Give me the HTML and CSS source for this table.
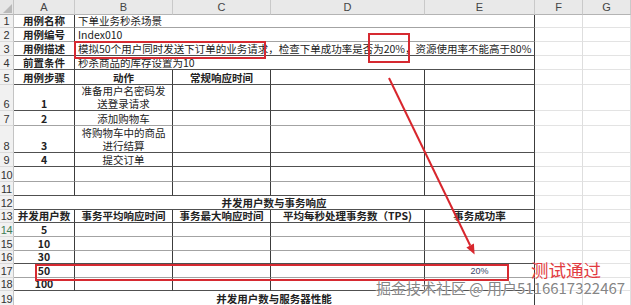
FILE: index.html
```html
<!DOCTYPE html>
<html lang="zh-CN">
<head>
<meta charset="utf-8">
<title>用例</title>
<link rel="stylesheet" href="styles.css">
</head>
<body>
<div class="sheet">
  <div class="row">
    <div class="corner"><svg class="tri" width="14" height="15" viewBox="0 0 14 15"><polygon points="12,4 12,13 3,13" fill="#b9b9b9"/></svg></div>
    <div class="ch">A</div><div class="ch">B</div><div class="ch">C</div><div class="ch">D</div><div class="ch">E</div><div class="ch">F</div><div class="ch">G</div>
  </div>
  <div class="row lt">
    <div class="rh">1</div>
    <div class="c b ctr">用例名称</div>
    <div class="c s4">下单业务秒杀场景</div>
    <div class="x"></div><div class="x"></div>
  </div>
  <div class="row lt">
    <div class="rh">2</div>
    <div class="c b ctr">用例编号</div>
    <div class="c s4">Index010</div>
    <div class="x"></div><div class="x"></div>
  </div>
  <div class="row">
    <div class="rh">3</div>
    <div class="c b ctr">用例描述</div>
    <div class="c s4">模拟50个用户同时发送下订单的业务请求，检查下单成功率是否为20%，资源使用率不能高于80%</div>
    <div class="x"></div><div class="x"></div>
  </div>
  <div class="row">
    <div class="rh">4</div>
    <div class="c b ctr">前置条件</div>
    <div class="c s4">秒杀商品的库存设置为10</div>
    <div class="x"></div><div class="x"></div>
  </div>
  <div class="row">
    <div class="rh">5</div>
    <div class="c b ctr">用例步骤</div>
    <div class="c b ctr">动作</div>
    <div class="c b ctr">常规响应时间</div>
    <div class="c"></div><div class="c"></div>
    <div class="x"></div><div class="x"></div>
  </div>
  <div class="row">
    <div class="rh">6</div>
    <div class="c b ctr">1</div>
    <div class="c ctr wrap">准备用户名密码发<br>送登录请求</div>
    <div class="c"></div><div class="c"></div><div class="c"></div>
    <div class="x"></div><div class="x"></div>
  </div>
  <div class="row lt">
    <div class="rh">7</div>
    <div class="c b ctr">2</div>
    <div class="c ctr">添加购物车</div>
    <div class="c"></div><div class="c"></div><div class="c"></div>
    <div class="x"></div><div class="x"></div>
  </div>
  <div class="row">
    <div class="rh">8</div>
    <div class="c b ctr">3</div>
    <div class="c ctr wrap">将购物车中的商品<br>进行结算</div>
    <div class="c"></div><div class="c"></div><div class="c"></div>
    <div class="x"></div><div class="x"></div>
  </div>
  <div class="row">
    <div class="rh">9</div>
    <div class="c b ctr">4</div>
    <div class="c ctr">提交订单</div>
    <div class="c"></div><div class="c"></div><div class="c"></div>
    <div class="x"></div><div class="x"></div>
  </div>
  <div class="row lt">
    <div class="rh">10</div>
    <div class="c"></div><div class="c"></div><div class="c"></div><div class="c"></div><div class="c"></div>
    <div class="x"></div><div class="x"></div>
  </div>
  <div class="row">
    <div class="rh">11</div>
    <div class="c"></div><div class="c"></div><div class="c"></div><div class="c"></div><div class="c"></div>
    <div class="x"></div><div class="x"></div>
  </div>
  <div class="row">
    <div class="rh">12</div>
    <div class="c s5 b ctr">并发用户数与事务响应</div>
    <div class="x"></div><div class="x"></div>
  </div>
  <div class="row">
    <div class="rh">13</div>
    <div class="c b ctr">并发用户数</div>
    <div class="c b ctr">事务平均响应时间</div>
    <div class="c b ctr">事务最大响应时间</div>
    <div class="c b ctr">平均每秒处理事务数（TPS)</div>
    <div class="c b ctr">事务成功率</div>
    <div class="x"></div><div class="x"></div>
  </div>
  <div class="row lt">
    <div class="rh sel">14</div>
    <div class="c b ctr">5</div>
    <div class="c"></div><div class="c"></div><div class="c"></div><div class="c"></div>
    <div class="x"></div><div class="x"></div>
  </div>
  <div class="row lt">
    <div class="rh">15</div>
    <div class="c b ctr">10</div>
    <div class="c"></div><div class="c"></div><div class="c"></div><div class="c"></div>
    <div class="x"></div><div class="x"></div>
  </div>
  <div class="row">
    <div class="rh">16</div>
    <div class="c b ctr">30</div>
    <div class="c"></div><div class="c"></div><div class="c"></div><div class="c"></div>
    <div class="x"></div><div class="x"></div>
  </div>
  <div class="row lt">
    <div class="rh">17</div>
    <div class="c b ctr">50</div>
    <div class="c"></div><div class="c"></div><div class="c"></div>
    <div class="c ctr pct">20%</div>
    <div class="x"></div><div class="x"></div>
  </div>
  <div class="row">
    <div class="rh">18</div>
    <div class="c b ctr">100</div>
    <div class="c"></div><div class="c"></div><div class="c"></div><div class="c"></div>
    <div class="x"></div><div class="x"></div>
  </div>
  <div class="row">
    <div class="rh">19</div>
    <div class="c s5 b ctr">并发用户数与服务器性能</div>
    <div class="x"></div><div class="x"></div>
  </div>
</div>

<div class="overlay">
  <div class="box box-desc"></div>
  <div class="box box-rate"></div>
  <div class="box box-row"></div>
  <svg class="arrow" width="631" height="305" viewBox="0 0 631 305">
    <line x1="389" y1="78" x2="470.2" y2="245.5" stroke="#d8262d" stroke-width="2"/>
    <polygon points="474.6,254.6 466.4,247.4 473.9,243.6" fill="#d8262d"/>
  </svg>
  <div class="pass">测试通过</div>
  <div class="wm">掘金技术社区 @ 用户5116617322467</div>
</div>
</body>
</html>
```

FILE: styles.css
```css
* { box-sizing: border-box; }

html, body {
  margin: 0;
  padding: 0;
  background: #ffffff;
}

body {
  position: relative;
  width: 631px;
  height: 305px;
  overflow: hidden;
  font-family: "Noto Sans CJK SC", "Noto Sans", sans-serif;
  font-size: 10.5px;
  color: #222;
}

.sheet {
  display: grid;
  grid-template-columns: 14px 61px 98px 98px 154px 110px 48px 48px;
  grid-template-rows: 15px 13px 14px 14px 14px 15px 26px 15px 27px 14px 15px 14px 14px 13px 14px 14px 13px 14px 13px 15px;
}

.row { display: contents; }

.corner {
  background: #e6e6e6;
  border-right: 1px solid #c4c4c4;
  border-bottom: 1px solid #b4b4b4;
}
.tri { display: block; }

.ch {
  background: #e9e9e9;
  border-right: 1px solid #c9c9c9;
  border-bottom: 1px solid #b4b4b4;
  font-family: "Liberation Sans", "DejaVu Sans", sans-serif;
  font-size: 11px;
  color: #444;
  display: flex;
  align-items: center;
  justify-content: center;
  line-height: 13px;
}

.rh {
  background: #f1f1f1;
  border-right: 1px solid #c4c4c4;
  border-bottom: 1px solid #dadada;
  font-family: "Liberation Sans", "DejaVu Sans", sans-serif;
  font-size: 11px;
  color: #333;
  display: flex;
  align-items: flex-end;
  justify-content: center;
  line-height: 12px;
  letter-spacing: -0.3px;
}
.rh.sel { color: #3f7d55; }

.c {
  border-right: 1px solid #3c3c3c;
  border-bottom: 1px solid #505050;
  display: flex;
  align-items: flex-end;
  justify-content: flex-start;
  padding: 0 3px;
  line-height: 12px;
  white-space: nowrap;
  overflow: visible;
}
.row.lt .c { border-bottom-color: #a3a3a3; }

.wrap { line-height: 12.5px; }

.x {
  border-right: 1px solid #dedede;
  border-bottom: 1px solid #e3e3e3;
}

.s4 { grid-column: span 4; }
.s5 { grid-column: span 5; }

.ctr {
  justify-content: center;
  text-align: center;
}

.b { font-weight: 700; }

.pct {
  font-size: 9px;
  color: #3b4868;
  font-family: "Liberation Sans", sans-serif;
}

.overlay {
  position: absolute;
  left: 0;
  top: 0;
  width: 631px;
  height: 305px;
  pointer-events: none;
}

.box {
  position: absolute;
  border: 2px solid #d62a31;
}
.box-desc { left: 74px; top: 41px; width: 192px; height: 18px; }
.box-rate { left: 368px; top: 33px; width: 42px; height: 30px; }
.box-row  { left: 35px; top: 264px; width: 474px; height: 17px; }

.arrow {
  position: absolute;
  left: 0;
  top: 0;
}

.pass {
  position: absolute;
  left: 531px;
  top: 262px;
  font-size: 17.5px;
  line-height: 16px;
  color: #e23a40;
  white-space: nowrap;
}

.wm {
  position: absolute;
  left: 376px;
  top: 281px;
  font-size: 15px;
  line-height: 14px;
  color: rgba(100, 100, 100, 0.8);
  text-shadow: 0 0 2px #ffffff, 0 0 1px #ffffff;
  white-space: nowrap;
}
```
